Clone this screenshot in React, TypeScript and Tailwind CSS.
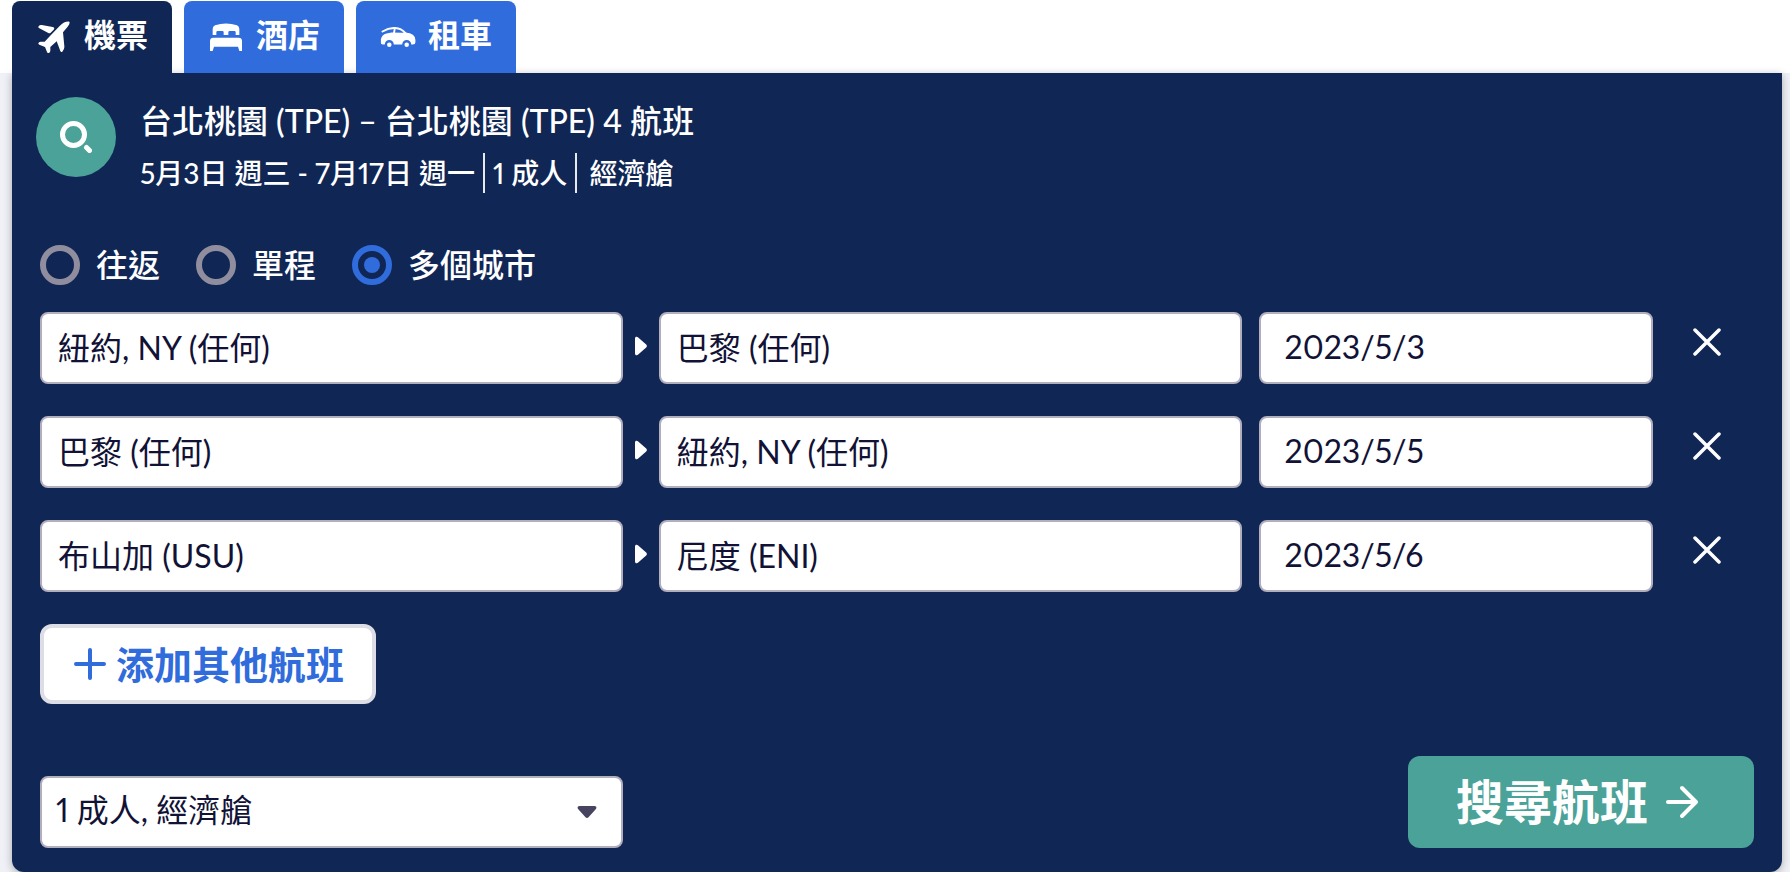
import { useState, type ReactNode } from "react";

type Flight = { from: string; to: string; date: string };

const initialFlights: Flight[] = [
  { from: "紐約, NY (任何)", to: "巴黎 (任何)", date: "2023/5/3" },
  { from: "巴黎 (任何)", to: "紐約, NY (任何)", date: "2023/5/5" },
  { from: "布山加 (USU)", to: "尼度 (ENI)", date: "2023/5/6" },
];

const fieldClass =
  "h-[72px] rounded-lg border-2 border-[#b2aebd] bg-white pb-1 text-[32px] font-normal text-[#111236]";

function PlaneIcon() {
  return (
    <svg viewBox="24 32 96 96" className="size-8" fill="currentColor" aria-hidden="true">
      <path d="M35 44 68 50Q76 52 71 58L62 67Q59 70 55 68L28 54Q23 51 26 48 29 43 35 44Z" />
      <path d="M118 34Q121 39 113 49L99 66 103 108Q104 117 97 124 93 127 91 122L80 93 61 110 61 121Q61 125 57 128 53 130 51 125L45 110 28 103Q23 101 26 97 28 94 32 94L44 94 60 77 89 47Q104 32 118 34Z" />
    </svg>
  );
}

function BedIcon() {
  return (
    <svg viewBox="30 38 96 84" className="h-7 w-8" fill="currentColor" aria-hidden="true">
      <path d="M38 74V56Q38 48 45 45 78 34 111 45 118 48 118 56V74H107V66Q107 62 103 62H89Q85 62 85 66V74H71V66Q71 62 67 62H53Q49 62 49 66V74Z" />
      <path d="M40 82H116Q126 82 126 92V122H118L114 109H42L38 122H30V92Q30 82 40 82Z" />
    </svg>
  );
}

function CarIcon() {
  return (
    <svg viewBox="30 50 108 62" className="h-5 w-9" fill="currentColor" aria-hidden="true">
      <path d="M36 64Q56 52 76 53 94 54 107 69" fill="none" stroke="currentColor" strokeWidth="6" strokeLinecap="round" />
      <path d="M74 55 71 72" fill="none" stroke="currentColor" strokeWidth="6" />
      <path d="M31 88Q34 74 48 70L64 67 96 68 107 67Q138 70 138 90V97Q138 104 130 104H125A14 14 0 0 0 97 104H71A14 14 0 0 0 43 104H37Q30 104 31 96Z" />
      <circle cx="57" cy="105" r="7" />
      <circle cx="111" cy="105" r="7" />
    </svg>
  );
}

function Tab({ active, icon, label, onSelect }: { active: boolean; icon: ReactNode; label: string; onSelect: () => void }) {
  return (
    <button
      type="button"
      role="tab"
      aria-selected={active}
      onClick={onSelect}
      className={`flex h-[72px] w-40 items-center gap-3 rounded-t-lg pl-6 text-[32px] leading-10 font-bold text-white ${
        active ? "bg-[#102655]" : "bg-[#306cdc]"
      }`}
    >
      <span className="flex w-9 justify-center">{icon}</span>
      <span className="pb-1">{label}</span>
    </button>
  );
}

export default function App() {
  const [tab, setTab] = useState(0);
  const [trip, setTrip] = useState("多個城市");
  const [flights, setFlights] = useState(initialFlights);

  return (
    <main
      lang="zh-Hant"
      className="min-h-screen bg-[#f0f1f7] font-['Lato','Noto_Sans_CJK_TC',sans-serif] font-medium proportional-nums"
    >
      <div role="tablist" className="flex gap-3 bg-white px-3 pt-px">
        {[
          { icon: <PlaneIcon />, label: "機票" },
          { icon: <BedIcon />, label: "酒店" },
          { icon: <CarIcon />, label: "租車" },
        ].map((item, i) => (
          <Tab key={item.label} {...item} active={tab === i} onSelect={() => setTab(i)} />
        ))}
      </div>

      <form
        onSubmit={(e) => e.preventDefault()}
        className="mr-2 ml-3 rounded-b-xl bg-[#102655] px-7 pt-6 pb-6 text-white shadow-[0_2px_8px_rgba(0,0,0,0.3)]"
      >
        <header className="-ml-1 flex gap-6">
          <button
            type="button"
            aria-label="搜尋"
            className="flex size-20 shrink-0 items-center justify-center rounded-full bg-[#4aa298]"
          >
            <svg viewBox="0 0 32 32" className="size-8" fill="none" stroke="currentColor" aria-hidden="true">
              <circle cx="13.500" cy="13.500" r="11" strokeWidth="5" />
              <path d="m26.500 26.500 3 3" strokeWidth="5" strokeLinecap="round" />
            </svg>
          </button>
          <div>
            <h1 className="text-[32px] leading-[48px] font-medium">台北桃園 (TPE) – 台北桃園 (TPE) 4 航班</h1>
            <p className="mt-2 flex text-[28px] leading-10">
              <span className="pr-2">5月3日 週三 - 7月17日 週一</span>
              <span className="border-l-2 border-white/90 px-2">1 成人</span>
              <span className="border-l-2 border-white/90 px-3">經濟艙</span>
            </p>
          </div>
        </header>

        <div role="radiogroup" aria-label="行程類型" className="mt-12 flex gap-9">
          {["往返", "單程", "多個城市"].map((name) => (
            <label key={name} className="flex items-center gap-4 text-[32px] leading-[48px]">
              <input
                type="radio"
                name="trip"
                checked={trip === name}
                onChange={() => setTrip(name)}
                className="grid size-10 appearance-none place-content-center rounded-full border-[6px] border-[#908e9e] before:size-4 before:rounded-full checked:border-[#306cdc] checked:before:bg-[#306cdc]"
              />
              {name}
            </label>
          ))}
        </div>

        <div className="mt-[23px] flex flex-col gap-8">
          {flights.map((f, i) => (
            <div key={f.from} className="flex items-center">
              <input aria-label="出發地" defaultValue={f.from} className={`${fieldClass} w-[34%] px-4`} />
              <svg viewBox="0 0 12 20" className="mx-3 mb-1 h-5 w-3 shrink-0" fill="currentColor" aria-hidden="true">
                <path d="M0 2.500C0 .5 2 .2 3.200 1.400l8 7.200c.9.800.9 2 0 2.800l-8 7.200C2 19.800 0 19.500 0 17.500Z" />
              </svg>
              <input aria-label="目的地" defaultValue={f.to} className={`${fieldClass} w-[34%] px-4`} />
              <input aria-label="日期" defaultValue={f.date} className={`${fieldClass} ml-[17px] w-[23%] px-6`} />
              <button
                type="button"
                aria-label="移除航班"
                onClick={() => setFlights(flights.filter((_, j) => j !== i))}
                className="ml-10 shrink-0 pb-3"
              >
                <svg viewBox="0 0 28 28" className="size-7" fill="none" stroke="currentColor" strokeWidth="3.500" strokeLinecap="round" aria-hidden="true">
                  <path d="m2 2 24 24M26 2 2 26" />
                </svg>
              </button>
            </div>
          ))}
        </div>

        <button
          type="button"
          onClick={() => setFlights([...flights, { from: "", to: "", date: "" }])}
          className="mt-8 flex h-20 items-center gap-2 rounded-xl border-4 border-[#dcdde5] bg-white px-7 text-[38px] leading-none font-bold text-[#306cdc]"
        >
          <svg viewBox="0 0 36 36" className="size-9" fill="none" stroke="currentColor" strokeWidth="4" strokeLinecap="round" aria-hidden="true">
            <path d="M4 18h28M18 4v28" />
          </svg>
          添加其他航班
        </button>

        <div className="mt-[52px] flex items-end justify-between">
          <div className="relative w-[34%]">
            <select aria-label="旅客和艙等" className={`${fieldClass} block w-full appearance-none px-[14px]`}>
              <option>1 成人, 經濟艙</option>
            </select>
            <svg viewBox="0 0 20 12" className="pointer-events-none absolute top-[30px] right-[26px] h-3 w-5" fill="#47445f" aria-hidden="true">
              <path d="M2.500 0h15c2 0 2.500 2 1.200 3.200l-7.200 8c-.8.900-2.200.9-3 0l-7.200-8C0 2 .5 0 2.500 0Z" />
            </svg>
          </div>
          <button
            type="submit"
            className="flex h-[92px] items-center gap-4 rounded-xl bg-[#4aa298] pr-[54px] pl-12 text-[48px] leading-none font-bold text-white"
          >
            搜尋航班
            <svg viewBox="0 0 36 36" className="size-9" fill="none" stroke="currentColor" strokeWidth="4" strokeLinecap="round" strokeLinejoin="round" aria-hidden="true">
              <path d="M4 18h28M18 4l14 14-14 14" />
            </svg>
          </button>
        </div>
      </form>
    </main>
  );
}
